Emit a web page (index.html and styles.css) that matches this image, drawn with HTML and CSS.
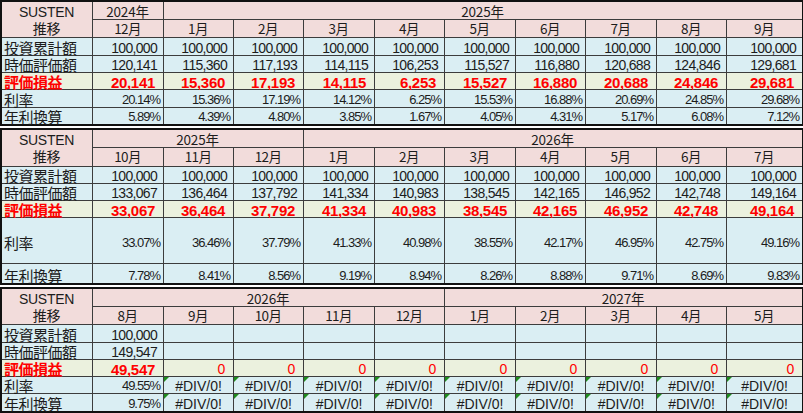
FILE: index.html
```html
<!DOCTYPE html>
<html lang="ja">
<head>
<meta charset="utf-8">
<title>SUSTEN 推移</title>
<link rel="stylesheet" href="styles.css">
</head>
<body>
<div class="sheet">
  <div class="tbl t1">
    <div class="c hd corner">SUSTEN<br>推移</div>
    <div class="c hd yr">2024年</div>
    <div class="c hd yr s9">2025年</div>
    <div class="c hd mo">12月</div><div class="c hd mo">1月</div><div class="c hd mo">2月</div><div class="c hd mo">3月</div><div class="c hd mo">4月</div><div class="c hd mo">5月</div><div class="c hd mo">6月</div><div class="c hd mo">7月</div><div class="c hd mo">8月</div><div class="c hd mo">9月</div>

    <div class="c bl lbl">投資累計額</div><div class="c bl num">100,000</div><div class="c bl num">100,000</div><div class="c bl num">100,000</div><div class="c bl num">100,000</div><div class="c bl num">100,000</div><div class="c bl num">100,000</div><div class="c bl num">100,000</div><div class="c bl num">100,000</div><div class="c bl num">100,000</div><div class="c bl num">100,000</div>

    <div class="c bl lbl">時価評価額</div><div class="c bl num">120,141</div><div class="c bl num">115,360</div><div class="c bl num">117,193</div><div class="c bl num">114,115</div><div class="c bl num">106,253</div><div class="c bl num">115,527</div><div class="c bl num">116,880</div><div class="c bl num">120,688</div><div class="c bl num">124,846</div><div class="c bl num">129,681</div>

    <div class="c gr lbl red">評価損益</div><div class="c gr num red">20,141</div><div class="c gr num red">15,360</div><div class="c gr num red">17,193</div><div class="c gr num red">14,115</div><div class="c gr num red">6,253</div><div class="c gr num red">15,527</div><div class="c gr num red">16,880</div><div class="c gr num red">20,688</div><div class="c gr num red">24,846</div><div class="c gr num red">29,681</div>

    <div class="c bl lbl">利率</div><div class="c bl num pct">20.14%</div><div class="c bl num pct">15.36%</div><div class="c bl num pct">17.19%</div><div class="c bl num pct">14.12%</div><div class="c bl num pct">6.25%</div><div class="c bl num pct">15.53%</div><div class="c bl num pct">16.88%</div><div class="c bl num pct">20.69%</div><div class="c bl num pct">24.85%</div><div class="c bl num pct">29.68%</div>

    <div class="c bl lbl">年利換算</div><div class="c bl num pct">5.89%</div><div class="c bl num pct">4.39%</div><div class="c bl num pct">4.80%</div><div class="c bl num pct">3.85%</div><div class="c bl num pct">1.67%</div><div class="c bl num pct">4.05%</div><div class="c bl num pct">4.31%</div><div class="c bl num pct">5.17%</div><div class="c bl num pct">6.08%</div><div class="c bl num pct">7.12%</div>
  </div>

  <div class="tbl t2">
    <div class="c hd corner">SUSTEN<br>推移</div>
    <div class="c hd yr s3">2025年</div>
    <div class="c hd yr s7">2026年</div>
    <div class="c hd mo">10月</div><div class="c hd mo">11月</div><div class="c hd mo">12月</div><div class="c hd mo">1月</div><div class="c hd mo">2月</div><div class="c hd mo">3月</div><div class="c hd mo">4月</div><div class="c hd mo">5月</div><div class="c hd mo">6月</div><div class="c hd mo">7月</div>

    <div class="c bl lbl">投資累計額</div><div class="c bl num">100,000</div><div class="c bl num">100,000</div><div class="c bl num">100,000</div><div class="c bl num">100,000</div><div class="c bl num">100,000</div><div class="c bl num">100,000</div><div class="c bl num">100,000</div><div class="c bl num">100,000</div><div class="c bl num">100,000</div><div class="c bl num">100,000</div>

    <div class="c bl lbl">時価評価額</div><div class="c bl num">133,067</div><div class="c bl num">136,464</div><div class="c bl num">137,792</div><div class="c bl num">141,334</div><div class="c bl num">140,983</div><div class="c bl num">138,545</div><div class="c bl num">142,165</div><div class="c bl num">146,952</div><div class="c bl num">142,748</div><div class="c bl num">149,164</div>

    <div class="c gr lbl red">評価損益</div><div class="c gr num red">33,067</div><div class="c gr num red">36,464</div><div class="c gr num red">37,792</div><div class="c gr num red">41,334</div><div class="c gr num red">40,983</div><div class="c gr num red">38,545</div><div class="c gr num red">42,165</div><div class="c gr num red">46,952</div><div class="c gr num red">42,748</div><div class="c gr num red">49,164</div>

    <div class="c bl lbl mid">利率</div><div class="c bl num pct mid">33.07%</div><div class="c bl num pct mid">36.46%</div><div class="c bl num pct mid">37.79%</div><div class="c bl num pct mid">41.33%</div><div class="c bl num pct mid">40.98%</div><div class="c bl num pct mid">38.55%</div><div class="c bl num pct mid">42.17%</div><div class="c bl num pct mid">46.95%</div><div class="c bl num pct mid">42.75%</div><div class="c bl num pct mid">49.16%</div>

    <div class="c bl lbl">年利換算</div><div class="c bl num pct">7.78%</div><div class="c bl num pct">8.41%</div><div class="c bl num pct">8.56%</div><div class="c bl num pct">9.19%</div><div class="c bl num pct">8.94%</div><div class="c bl num pct">8.26%</div><div class="c bl num pct">8.88%</div><div class="c bl num pct">9.71%</div><div class="c bl num pct">8.69%</div><div class="c bl num pct">9.83%</div>
  </div>

  <div class="tbl t3">
    <div class="c hd corner">SUSTEN<br>推移</div>
    <div class="c hd yr s5">2026年</div>
    <div class="c hd yr s5">2027年</div>
    <div class="c hd mo">8月</div><div class="c hd mo">9月</div><div class="c hd mo">10月</div><div class="c hd mo">11月</div><div class="c hd mo">12月</div><div class="c hd mo">1月</div><div class="c hd mo">2月</div><div class="c hd mo">3月</div><div class="c hd mo">4月</div><div class="c hd mo">5月</div>

    <div class="c bl lbl">投資累計額</div><div class="c bl num">100,000</div><div class="c bl"></div><div class="c bl"></div><div class="c bl"></div><div class="c bl"></div><div class="c bl"></div><div class="c bl"></div><div class="c bl"></div><div class="c bl"></div><div class="c bl"></div>

    <div class="c bl lbl">時価評価額</div><div class="c bl num">149,547</div><div class="c bl"></div><div class="c bl"></div><div class="c bl"></div><div class="c bl"></div><div class="c bl"></div><div class="c bl"></div><div class="c bl"></div><div class="c bl"></div><div class="c bl"></div>

    <div class="c gr lbl red">評価損益</div><div class="c gr num red">49,547</div><div class="c gr num red zero">0</div><div class="c gr num red zero">0</div><div class="c gr num red zero">0</div><div class="c gr num red zero">0</div><div class="c gr num red zero">0</div><div class="c gr num red zero">0</div><div class="c gr num red zero">0</div><div class="c gr num red zero">0</div><div class="c gr num red zero">0</div>

    <div class="c bl lbl">利率</div><div class="c bl num pct">49.55%</div><div class="c bl err"><i class="flag"></i>#DIV/0!</div><div class="c bl err"><i class="flag"></i>#DIV/0!</div><div class="c bl err"><i class="flag"></i>#DIV/0!</div><div class="c bl err"><i class="flag"></i>#DIV/0!</div><div class="c bl err"><i class="flag"></i>#DIV/0!</div><div class="c bl err"><i class="flag"></i>#DIV/0!</div><div class="c bl err"><i class="flag"></i>#DIV/0!</div><div class="c bl err"><i class="flag"></i>#DIV/0!</div><div class="c bl err"><i class="flag"></i>#DIV/0!</div>

    <div class="c bl lbl">年利換算</div><div class="c bl num pct">9.75%</div><div class="c bl err"><i class="flag"></i>#DIV/0!</div><div class="c bl err"><i class="flag"></i>#DIV/0!</div><div class="c bl err"><i class="flag"></i>#DIV/0!</div><div class="c bl err"><i class="flag"></i>#DIV/0!</div><div class="c bl err"><i class="flag"></i>#DIV/0!</div><div class="c bl err"><i class="flag"></i>#DIV/0!</div><div class="c bl err"><i class="flag"></i>#DIV/0!</div><div class="c bl err"><i class="flag"></i>#DIV/0!</div><div class="c bl err"><i class="flag"></i>#DIV/0!</div>
  </div>
</div>
</body>
</html>
```

FILE: styles.css
```css
html, body {
  margin: 0;
  padding: 0;
  background: #ffffff;
}

.sheet {
  display: flex;
  flex-direction: column;
  gap: 2px;
  width: 803px;
  overflow: hidden;
}

.tbl {
  display: grid;
  grid-template-columns: 90px 70px 69px 69px 70px 69px 70px 69px 70px 69px 75px;
  gap: 1px;
  width: max-content;
  background: #3c3c3c;
  border: 2px solid #111;
  color: #1c1c1c;
  font-family: "Liberation Sans", "Noto Sans CJK JP", sans-serif;
  font-size: 14px;
}

.t1 { grid-template-rows: 17px 17px 17px 16px 16px 17px 16px; }
.t2 { grid-template-rows: 17px 18px 16px 16px 16px 45px 19px; }
.t3 { grid-template-rows: 17px 17px 17px 16px 16px 16px 17px; }

.c {
  display: flex;
  align-items: flex-end;
  min-width: 0;
  padding: 0 3px 0 2px;
  line-height: 13px;
  white-space: nowrap;
  position: relative;
}

.hd { background: #f2dcdb; }
.bl { background: #daeef3; }
.gr { background: #ebf1de; }

.hd {
  justify-content: center;
  align-items: center;
  font-family: "Noto Sans CJK JP", sans-serif;
  font-size: 13.5px;
  letter-spacing: -0.6px;
}

.yr {
  letter-spacing: -0.2px;
  padding-top: 1px;
}

.mo {
  padding-bottom: 1px;
}

.s3 { grid-column: span 3; }
.s5 { grid-column: span 5; }
.s7 { grid-column: span 7; }
.s9 { grid-column: span 9; }

.corner {
  grid-row: span 2;
  text-align: center;
  line-height: 17px;
  font-size: 14px;
  letter-spacing: -0.3px;
  padding-top: 2px;
  font-family: "Liberation Sans", "Noto Sans CJK JP", sans-serif;
}

.lbl {
  font-family: "Noto Sans CJK JP", sans-serif;
  font-size: 15px;
  padding-bottom: 1px;
  letter-spacing: -0.5px;
}

.num {
  justify-content: flex-end;
  letter-spacing: -0.7px;
  padding-right: 6px;
}

.red {
  color: #ff0000;
  font-weight: bold;
}

.num.red {
  font-size: 15px;
  letter-spacing: -0.3px;
  padding-right: 8px;
}

.num.zero {
  font-size: 14px;
  font-weight: normal;
  padding-right: 8px;
}

.num.pct {
  font-size: 13px;
  letter-spacing: -1px;
  padding-right: 3px;
  padding-bottom: 1px;
}

.num.pct.mid,
.lbl.mid {
  align-items: center;
  padding-top: 3px;
  padding-bottom: 0;
}

.err {
  justify-content: center;
  letter-spacing: 0;
  padding: 0;
}

.flag {
  position: absolute;
  top: 0;
  left: 0;
  width: 0;
  height: 0;
  border-top: 5px solid #1e8c1e;
  border-right: 5px solid transparent;
}
```
